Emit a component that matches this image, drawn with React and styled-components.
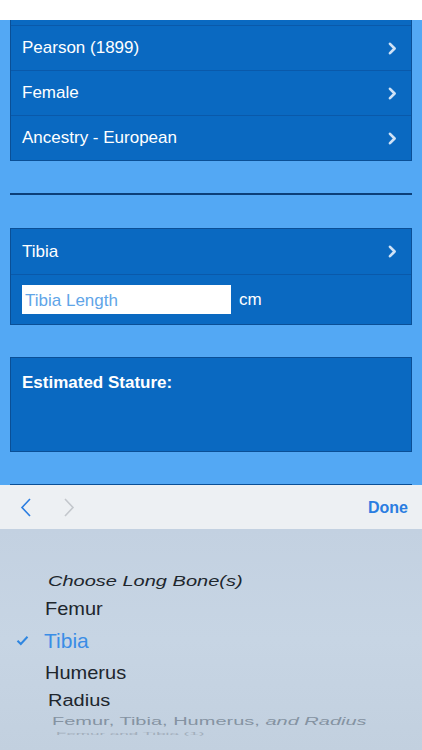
import React from "react";
import styled, { createGlobalStyle } from "styled-components";

const Global = createGlobalStyle`
  html, body { margin: 0; padding: 0; background: #53a8f4; }
  body { font-family: "Liberation Sans", Arial, sans-serif; -webkit-font-smoothing: antialiased; }
  * { box-sizing: border-box; }
`;

const Page = styled.div`
  width: 422px;
  height: 750px;
  overflow: hidden;
  display: flex;
  flex-direction: column;
  background: #53a8f4;
`;

const StatusBar = styled.div`
  height: 20px;
  background: #ffffff;
  flex-shrink: 0;
`;

const Content = styled.div`
  flex: 1;
  padding: 0 10px;
  display: flex;
  flex-direction: column;
  overflow: hidden;
`;

const Card = styled.div`
  background: #0a69c1;
  border: 1px solid #0a4f96;
  border-top-width: ${(p) => (p.$cut ? 0 : 1)}px;
  margin-top: ${(p) => p.$mt || 0}px;
  flex-shrink: 0;
`;

const Row = styled.div`
  box-sizing: content-box;
  height: ${(p) => p.$h || 44}px;
  display: flex;
  align-items: center;
  padding: 0 14px 0 11px;
  color: #ffffff;
  font-size: 17px;
  & + & { border-top: 1px solid #0a59aa; }
`;

const Label = styled.span`
  flex: 1;
`;

const Chevron = () => (
  <svg width="9" height="13" viewBox="0 0 9 13">
    <path d="M2 1.8 L6.6 6.5 L2 11.2" fill="none" stroke="#cfe2f6" strokeWidth="2.6" strokeLinecap="round" strokeLinejoin="round" />
  </svg>
);

const Divider = styled.div`
  height: 2px;
  background: #0c3f78;
  margin-top: 32px;
  flex-shrink: 0;
`;

const InputRow = styled.div`
  box-sizing: content-box;
  height: 39px;
  display: flex;
  align-items: flex-start;
  padding: 10px 11px 0;
  border-top: 1px solid #0a59aa;
  gap: 8px;
`;

const LengthInput = styled.input`
  width: 209px;
  height: 29px;
  border: none;
  outline: none;
  background: #ffffff;
  font-family: "Liberation Sans", Arial, sans-serif;
  font-size: 17px;
  padding: 2px 3px 0;
  color: #1a1a1a;
  &::placeholder { color: #5fa5e8; }
`;

const Unit = styled.span`
  color: #ffffff;
  font-size: 17px;
  line-height: 29px;
`;

const ResultBox = styled.div`
  height: 93px;
  padding: 15px 11px;
  color: #ffffff;
  font-size: 17px;
  font-weight: bold;
`;

const Toolbar = styled.div`
  height: 44px;
  flex-shrink: 0;
  background: #edf0f3;
  display: flex;
  align-items: center;
  padding: 0 14px 0 20px;
`;

const NavButton = styled.button`
  background: none;
  border: none;
  padding: 0;
  width: 43px;
  height: 44px;
  display: flex;
  align-items: center;
  justify-content: flex-start;
`;

const Done = styled.span`
  margin-left: auto;
  color: #2a7de1;
  font-size: 16px;
  font-weight: bold;
  padding-top: 2px;
`;

const Picker = styled.div`
  height: 221px;
  flex-shrink: 0;
  background: linear-gradient(180deg, #c3d1e1 0%, #c7d5e4 50%, #c2d0df 100%);
  position: relative;
  padding-top: 40px;
  display: flex;
  flex-direction: column;
`;

const PickItem = styled.div`
  display: flex;
  align-items: center;
  height: ${(p) => p.$h}px;
  flex-shrink: 0;
  padding-left: ${(p) => p.$x}px;
  font-size: ${(p) => p.$size}px;
  color: ${(p) => p.$color || "#20262d"};
  font-style: ${(p) => (p.$italic ? "italic" : "normal")};
  white-space: nowrap;
  transform: scaleY(${(p) => p.$sy || 1});
  opacity: ${(p) => p.$op || 1};
`;

const Check = styled.span`
  position: absolute;
  left: 16px;
  display: flex;
`;

const Em = styled.span`
  font-style: italic;
`;

export default function App() {
  return (
    <Page>
      <Global />
      <StatusBar />
      <Content>
        <Card $cut>
          <Row $h={5} />
          <Row><Label>Pearson (1899)</Label><Chevron /></Row>
          <Row><Label>Female</Label><Chevron /></Row>
          <Row><Label>Ancestry - European</Label><Chevron /></Row>
        </Card>
        <Divider />
        <Card $mt={33}>
          <Row $h={45}><Label>Tibia</Label><Chevron /></Row>
          <InputRow>
            <LengthInput placeholder="Tibia Length" />
            <Unit>cm</Unit>
          </InputRow>
        </Card>
        <Card $mt={32}>
          <ResultBox>Estimated Stature:</ResultBox>
        </Card>
        <Card $mt={32}>
          <Row $h={4} />
        </Card>
      </Content>
      <Toolbar>
        <NavButton aria-label="previous">
          <svg width="12" height="19" viewBox="0 0 12 19">
            <path d="M10 1 L2 9.5 L10 18" fill="none" stroke="#2a7de1" strokeWidth="1.6" />
          </svg>
        </NavButton>
        <NavButton aria-label="next">
          <svg width="12" height="19" viewBox="0 0 12 19">
            <path d="M2 1 L10 9.5 L2 18" fill="none" stroke="#c3c7cc" strokeWidth="1.6" />
          </svg>
        </NavButton>
        <Done>Done</Done>
      </Toolbar>
      <Picker>
        <PickItem $h={24} $x={48} $size={20} $italic $sy={0.76}>Choose Long Bone(s)</PickItem>
        <PickItem $h={31} $x={45} $size={20} $sy={0.95}>Femur</PickItem>
        <PickItem $h={33} $x={44} $size={21} $color="#3a8de6">
          <Check>
            <svg width="13" height="11" viewBox="0 0 13 11">
              <path d="M1.5 5.8 L4.8 9 L11.5 1.8" fill="none" stroke="#2f86e0" strokeWidth="2" />
            </svg>
          </Check>
          Tibia
        </PickItem>
        <PickItem $h={31} $x={45} $size={20} $sy={0.95}>Humerus</PickItem>
        <PickItem $h={25} $x={48} $size={20} $sy={0.82}>Radius</PickItem>
        <PickItem $h={17} $x={52} $size={20} $sy={0.55} $color="#8593a2">
          Femur, Tibia, Humerus, <Em>&nbsp;and Radius</Em>
        </PickItem>
        <PickItem $h={8} $x={56} $size={17} $sy={0.25} $color="#9aa6b3" $op={0.8}>
          Femur and Tibia (1)
        </PickItem>
      </Picker>
    </Page>
  );
}
